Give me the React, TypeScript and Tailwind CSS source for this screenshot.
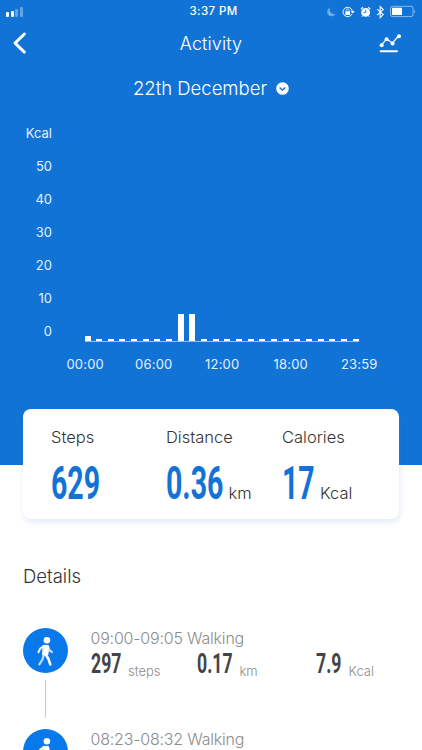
import clsx from "clsx";

const axis = ["Kcal", "50", "40", "30", "20", "10", "0"];
const hours = ["00:00", "06:00", "12:00", "18:00", "23:59"];
const bars = Array.from({ length: 24 }, (_, i) => (i === 0 ? 5 : i === 8 || i === 9 ? 27 : 2));

const stats = [
  { label: "Steps", value: "629", unit: "", box: "w-[115px]", num: "w-[51px]" },
  { label: "Distance", value: "0.36", unit: "km", box: "w-[116px]", num: "w-[62.5px]" },
  { label: "Calories", value: "17", unit: "Kcal", box: "w-[100px]", num: "w-[38px]" },
];

function StatusBar() {
  return (
    <div className="flex h-[23px] items-center justify-between pl-[6px] pr-[6px]">
      <div className="flex h-[10px] w-[120px] items-end gap-[1.6px]">
        <span className="h-[4.5px] w-[3px] rounded-[1px] bg-white" />
        <span className="h-[6px] w-[3px] rounded-[1px] bg-white" />
        <span className="h-[8px] w-[3px] rounded-[1px] bg-white/35" />
        <span className="h-[10px] w-[3px] rounded-[1px] bg-white/35" />
      </div>
      <span className="pl-[5px] text-[11.5px] font-medium tracking-[0.4px]">3:37 PM</span>
      <div className="flex w-[120px] justify-end">
        <svg width="90" height="14" viewBox="0 0 90 14" fill="none">
          <path d="M4.3 2.4a4.6 4.6 0 1 0 5.4 6.7A4.7 4.7 0 0 1 4.3 2.4z" fill="#fff" opacity=".4" />
          <path d="M26 8.9a4.7 4.7 0 1 1 .3-3" stroke="#fff" />
          <path d="M24.6 6h4.2l-2.1 2.5z" fill="#fff" />
          <rect x="19.3" y="6.3" width="4.8" height="3.6" rx=".4" fill="#fff" />
          <path d="M20.2 6.5V5.4a1.5 1.5 0 0 1 3 0v1.1" stroke="#fff" strokeWidth=".8" />
          <circle cx="39.6" cy="7.4" r="4.4" fill="#fff" />
          <path d="M34.9 4.1l2.1-1.9M44.3 4.1l-2.1-1.9" stroke="#fff" strokeWidth="1.2" />
          <path d="M36.6 10.8l-.8 1M42.6 10.8l.8 1" stroke="#fff" />
          <path d="M39.8 4.8v2.8h-2.3" stroke="#1273d6" strokeWidth=".9" />
          <path d="M51.2 4.2l6 5.4-3 3V1.6l3 3-6 5.4" stroke="#fff" strokeWidth="1.1" />
          <rect x="64.5" y="1.3" width="22.5" height="10.3" rx="2" stroke="#fff" strokeOpacity=".5" />
          <rect x="66" y="2.8" width="10" height="7.3" rx=".6" fill="#fff" />
          <path d="M88.3 4.8c1.2.5 1.2 3 0 3.5z" fill="#fff" opacity=".5" />
        </svg>
      </div>
    </div>
  );
}

function NavBar() {
  return (
    <div className="flex h-[40px] items-center justify-between pl-[12px] pr-[20px]">
      <svg width="30" height="24" viewBox="0 0 30 24" fill="none" stroke="#fff" strokeWidth="2.9" strokeLinecap="round" strokeLinejoin="round">
        <path d="M12.4 3L3 12.1l9.4 9" />
      </svg>
      <h1 className="pl-[2px] text-[18px] font-light tracking-[0.1px]">Activity</h1>
      <svg width="24" height="22" viewBox="0 0 24 22" fill="none" stroke="#fff" strokeWidth="1.3">
        <path d="M3.5 13l5-6 6 4 6-7" />
        <g fill="#fff" stroke="none">
          <circle cx="3.6" cy="13.3" r="2" />
          <circle cx="8.6" cy="7.3" r="2" />
          <circle cx="14.6" cy="11.4" r="2" />
          <circle cx="21" cy="4.2" r="2" />
        </g>
        <path d="M2.6 19.3H19" strokeWidth="2" strokeLinecap="round" />
      </svg>
    </div>
  );
}

function Chart() {
  return (
    <div className="pt-[6px] text-[13px] text-[#e3f0ff]">
      <div className="flex">
        <div className="w-[52px] text-right">
          {axis.map((label) => (
            <div key={label} className="flex h-[33px] items-center justify-end pb-px">
              {label}
            </div>
          ))}
        </div>
        <div className="ml-[32.5px] flex h-[224px] w-[274.3px] items-end justify-between border-b border-[#8fc4f8]">
          {bars.map((height, i) => (
            <span key={i} className="w-[6px] bg-white" style={{ height }} />
          ))}
        </div>
      </div>
      <div className="flex pl-[51px] tracking-[0.2px]">
        {hours.map((hour) => (
          <span key={hour} className="mt-[5px] w-[68.5px] text-center leading-[20px]">
            {hour}
          </span>
        ))}
      </div>
    </div>
  );
}

// Condensed numerals, squeezed from the bold cut
function Num({ value, className }: { value: string; className: string }) {
  return (
    <span className={clsx("inline-block shrink-0 whitespace-nowrap font-['Roboto',sans-serif] font-bold", className)}>
      <span className="inline-block origin-left scale-x-[0.62]">{value}</span>
    </span>
  );
}

function Summary() {
  return (
    <section className="relative mx-[23px] -mt-[56px] flex h-[110px] rounded-[8px] bg-white pl-[28px] shadow-[1px_3px_6px_rgba(70,130,220,0.16)]">
      {stats.map((s) => (
        <div key={s.label} className={s.box}>
          <div className="mt-[16px] text-[16.5px] leading-[24px] font-light text-[#333]">{s.label}</div>
          <div className="mt-[10px] flex items-baseline whitespace-nowrap leading-[48px]">
            <Num value={s.value} className={clsx("text-[46px] text-[#1273d6]", s.num)} />
            <span className="text-[16.5px] font-light text-[#333]">{s.unit}</span>
          </div>
        </div>
      ))}
    </section>
  );
}

function WalkIcon() {
  return (
    <div className="flex size-[45px] shrink-0 items-center justify-center rounded-full bg-[#0878ea]">
      <svg width="45" height="45" viewBox="0 0 45 45" fill="none" stroke="#fff" strokeLinecap="round" strokeLinejoin="round">
        <circle cx="23.9" cy="12.2" r="3.3" fill="#fff" stroke="none" />
        <path d="M25 18.5l1.4 3.6 2.6 2M20.8 27l-1.5 4.8-3 4.6" strokeWidth="2.2" opacity=".75" />
        <path d="M21 18l-3.8 2.6-1.8 3.6" strokeWidth="2" />
        <path d="M20.4 17.4h4.8l.4 2-.7 7.4-4.9.2z" fill="#fff" strokeWidth="1" />
        <path d="M22.6 26.5l2.8 4.3 1.9 5.6" strokeWidth="2.6" />
      </svg>
    </div>
  );
}

function Entry({ time, values }: { time: string; values?: string[] }) {
  return (
    <div className="flex h-[101px] gap-[22.5px]">
      <div className="flex flex-col items-center">
        <WalkIcon />
        {values && <span className="mt-[7px] h-[38px] w-[1.5px] bg-[#a5d0fa]" />}
      </div>
      <div className="whitespace-nowrap text-[#8c8c8c]">
        <div className="text-[16px] leading-[20px] font-light tracking-[-0.2px]">{time}</div>
        {values && (
          <div className="flex items-start text-[13px] leading-[32px] font-light">
            <Num value={values[0]} className="w-[37.5px] text-[28.5px] text-[#444]" />
            <span className="w-[68.5px] pt-[7px]">steps</span>
            <Num value={values[1]} className="w-[43px] text-[28.5px] text-[#444]" />
            <span className="w-[76px] pt-[7px]">km</span>
            <Num value={values[2]} className="w-[33px] text-[28.5px] text-[#444]" />
            <span className="pt-[7px]">Kcal</span>
          </div>
        )}
      </div>
    </div>
  );
}

export default function App() {
  return (
    <main className="h-[750px] w-[422px] overflow-hidden bg-white font-['Inter',sans-serif]">
      <header className="h-[465px] bg-[#1273d6] text-white">
        <StatusBar />
        <NavBar />
        <div className="mt-px flex h-[48px] items-center justify-center gap-[9px]">
          <span className="pt-px text-[18.5px] font-light">22th December</span>
          <svg width="13" height="13" viewBox="0 0 13 13" fill="none">
            <circle cx="6.5" cy="6.5" r="6.3" fill="#fff" />
            <path d="M3.6 5.5l2.9 2.6 2.9-2.6" stroke="#1273d6" strokeWidth="1.3" />
          </svg>
        </div>
        <Chart />
      </header>
      <Summary />
      <section className="px-[23px] pt-[43px]">
        <h2 className="text-[18.5px] leading-[28px] font-light text-[#333]">Details</h2>
        <div className="mt-[38px]">
          <Entry time="09:00-09:05 Walking" values={["297", "0.17", "7.9"]} />
          <Entry time="08:23-08:32 Walking" />
        </div>
      </section>
    </main>
  );
}
